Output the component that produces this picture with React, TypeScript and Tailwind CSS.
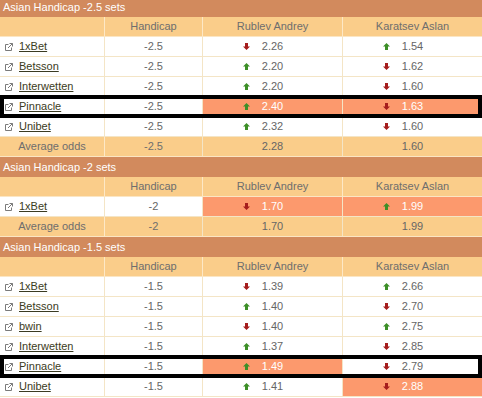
type Move = "up" | "down" | null

type Odd = {
  value: string
  move: Move
  best?: boolean
}

type Row = {
  bookie: string
  handicap: string
  home: Odd
  away: Odd
  boxed?: boolean
}

type Section = {
  title: string
  rows: Row[]
  average?: { handicap: string; home: string; away: string }
}

const sections: Section[] = [
  {
    title: "Asian Handicap -2.5 sets",
    rows: [
      { bookie: "1xBet", handicap: "-2.5", home: { value: "2.26", move: "down" }, away: { value: "1.54", move: "up" } },
      { bookie: "Betsson", handicap: "-2.5", home: { value: "2.20", move: "up" }, away: { value: "1.62", move: "down" } },
      { bookie: "Interwetten", handicap: "-2.5", home: { value: "2.20", move: "up" }, away: { value: "1.60", move: "down" } },
      {
        bookie: "Pinnacle",
        handicap: "-2.5",
        home: { value: "2.40", move: "up", best: true },
        away: { value: "1.63", move: "down", best: true },
        boxed: true,
      },
      { bookie: "Unibet", handicap: "-2.5", home: { value: "2.32", move: "up" }, away: { value: "1.60", move: "down" } },
    ],
    average: { handicap: "-2.5", home: "2.28", away: "1.60" },
  },
  {
    title: "Asian Handicap -2 sets",
    rows: [
      {
        bookie: "1xBet",
        handicap: "-2",
        home: { value: "1.70", move: "down", best: true },
        away: { value: "1.99", move: "up", best: true },
      },
    ],
    average: { handicap: "-2", home: "1.70", away: "1.99" },
  },
  {
    title: "Asian Handicap -1.5 sets",
    rows: [
      { bookie: "1xBet", handicap: "-1.5", home: { value: "1.39", move: "down" }, away: { value: "2.66", move: "up" } },
      { bookie: "Betsson", handicap: "-1.5", home: { value: "1.40", move: "up" }, away: { value: "2.70", move: "down" } },
      { bookie: "bwin", handicap: "-1.5", home: { value: "1.40", move: "down" }, away: { value: "2.75", move: "up" } },
      { bookie: "Interwetten", handicap: "-1.5", home: { value: "1.37", move: "up" }, away: { value: "2.85", move: "down" } },
      {
        bookie: "Pinnacle",
        handicap: "-1.5",
        home: { value: "1.49", move: "up", best: true },
        away: { value: "2.79", move: "down" },
        boxed: true,
      },
      {
        bookie: "Unibet",
        handicap: "-1.5",
        home: { value: "1.41", move: "up" },
        away: { value: "2.88", move: "down", best: true },
      },
    ],
  },
]

const grid = "grid h-5 grid-cols-[104px_98px_140px_140px]"

function Arrow({ move }: { move: Move }) {
  if (!move) return <span className="w-[7px]" />
  const up = move === "up"
  return (
    <svg width="7" height="7" viewBox="0 0 7 7" className={up ? "" : "rotate-180"}>
      <polygon points="3.5,0 7,3.5 5,3.5 5,7 2,7 2,3.5 0,3.5" fill={up ? "#3d8f27" : "#a51d1d"} />
    </svg>
  )
}

function LinkIcon() {
  return (
    <svg width="8" height="8" viewBox="0 0 8 8" fill="none" stroke="#7a7a7a" strokeWidth="1">
      <path d="M3.5 1.5H0.5V7.5H6.5V4.5" />
      <path d="M3 5L7.5 0.5M4.5 0.5H7.5V3.5" />
    </svg>
  )
}

function OddCell({ odd }: { odd: Odd }) {
  return (
    <div
      className={`flex items-center justify-center border-l border-[#f4e5c6] ${
        odd.best ? "bg-[#fc996d] text-white" : "text-[#666]"
      }`}
    >
      <span className="flex items-center gap-3">
        <Arrow move={odd.move} />
        <span>{odd.value}</span>
        <span className="w-[7px]" />
      </span>
    </div>
  )
}

function OddsSection({ section }: { section: Section }) {
  return (
    <div>
      <div className="flex h-5 items-center bg-[#d28a5d] px-[3px] text-white">{section.title}</div>
      <div className={`${grid} border-b border-[#fbe6c4] bg-[#facd8a] text-[#6e6e6e]`}>
        <div />
        <div className="flex items-center justify-center border-l border-[#fde8c6]">Handicap</div>
        <div className="flex items-center justify-center border-l border-[#fde8c6]">Rublev Andrey</div>
        <div className="flex items-center justify-center border-l border-[#fde8c6]">Karatsev Aslan</div>
      </div>
      {section.rows.map((row) => (
        <div
          key={row.bookie}
          className={`${grid} border-b border-[#f4e5c6] bg-white ${row.boxed ? "relative" : ""}`}
        >
          <div className="flex items-center gap-[6px] pl-[5px]">
            <LinkIcon />
            <span className="text-[#3b3b22] underline">{row.bookie}</span>
          </div>
          <div className="flex items-center justify-center border-l border-[#f4e5c6] text-[#666]">
            {row.handicap}
          </div>
          <OddCell odd={row.home} />
          <OddCell odd={row.away} />
          {row.boxed && (
            <span className="pointer-events-none absolute inset-x-0 -top-[2px] -bottom-[2px] z-10 border-4 border-black" />
          )}
        </div>
      ))}
      {section.average && (
        <div className={`${grid} border-b border-[#fbe6c4] bg-[#facd8a] text-[#6e6e6e]`}>
          <div className="flex items-center justify-center">Average odds</div>
          <div className="flex items-center justify-center border-l border-[#fde8c6]">
            {section.average.handicap}
          </div>
          <OddCell odd={{ value: section.average.home, move: null }} />
          <OddCell odd={{ value: section.average.away, move: null }} />
        </div>
      )}
    </div>
  )
}

export default function App() {
  return (
    <div className="h-[398px] w-[482px] overflow-hidden bg-white font-['Liberation_Sans',Arial,sans-serif] text-[11px]">
      <div className="-mt-[3px]">
        {sections.map((section) => (
          <OddsSection key={section.title} section={section} />
        ))}
      </div>
    </div>
  )
}
